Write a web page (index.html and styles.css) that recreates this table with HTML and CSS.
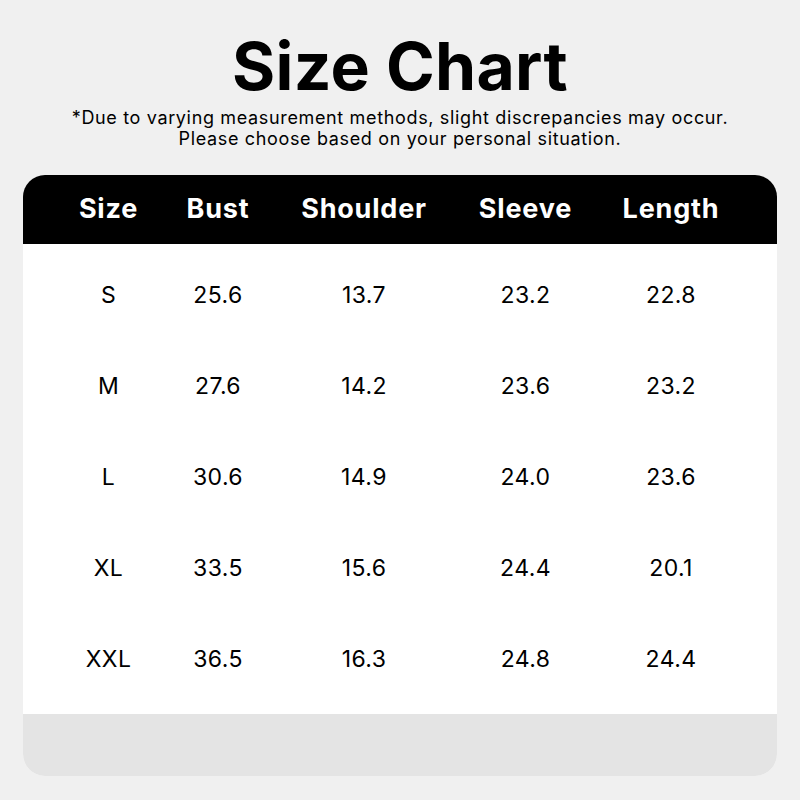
FILE: index.html
```html
<!DOCTYPE html>
<html>
<head>
<meta charset="utf-8">
<link rel="stylesheet" href="styles.css">
</head>
<body>
<div class="page">
  <h1 class="title">Size Chart</h1>
  <p class="note">*Due to varying measurement methods, slight discrepancies may occur.<br>Please choose based on your personal situation.</p>
  <div class="card">
    <div class="head grid">
      <div>Size</div><div>Bust</div><div>Shoulder</div><div>Sleeve</div><div>Length</div>
    </div>
    <div class="body">
      <div class="row grid"><div>S</div><div>25.6</div><div>13.7</div><div>23.2</div><div>22.8</div></div>
      <div class="row grid"><div>M</div><div>27.6</div><div>14.2</div><div>23.6</div><div>23.2</div></div>
      <div class="row grid"><div>L</div><div>30.6</div><div>14.9</div><div>24.0</div><div>23.6</div></div>
      <div class="row grid"><div>XL</div><div>33.5</div><div>15.6</div><div>24.4</div><div>20.1</div></div>
      <div class="row grid"><div>XXL</div><div>36.5</div><div>16.3</div><div>24.8</div><div>24.4</div></div>
    </div>
    <div class="foot"></div>
  </div>
</div>
</body>
</html>
```

FILE: styles.css
```css
html, body {
  margin: 0;
  padding: 0;
  background: #f0f0f0;
}
body {
  width: 800px;
  height: 800px;
  overflow: hidden;
  font-family: Inter, "Liberation Sans", sans-serif;
  color: #000;
}
.page {
  display: flex;
  flex-direction: column;
  align-items: center;
  padding-top: 26px;
}
.title {
  margin: 0;
  font-size: 66px;
  font-weight: 700;
  line-height: 80px;
  letter-spacing: 0.3px;
}
.note {
  margin: 1px 0 0;
  font-size: 18px;
  line-height: 21px;
  letter-spacing: 0.65px;
  text-align: center;
}
.card {
  margin-top: 26px;
  width: 754px;
  border-radius: 22px;
  overflow: hidden;
  background: #fff;
}
.grid {
  display: grid;
  grid-template-columns: 106px 113px 179px 144px 147px;
  justify-content: center;
  text-align: center;
}
.head {
  background: #000;
  color: #fff;
  height: 69px;
  padding-bottom: 3px;
  box-sizing: border-box;
  align-items: center;
  font-size: 27px;
  font-weight: 700;
  letter-spacing: 0.8px;
}
.body {
  height: 470px;
  padding-top: 5px;
  box-sizing: border-box;
}
.row {
  height: 91px;
  align-items: center;
  font-size: 23px;
  font-weight: 400;
  letter-spacing: 0.4px;
}
.foot {
  height: 62px;
  background: #e4e4e4;
}
```
